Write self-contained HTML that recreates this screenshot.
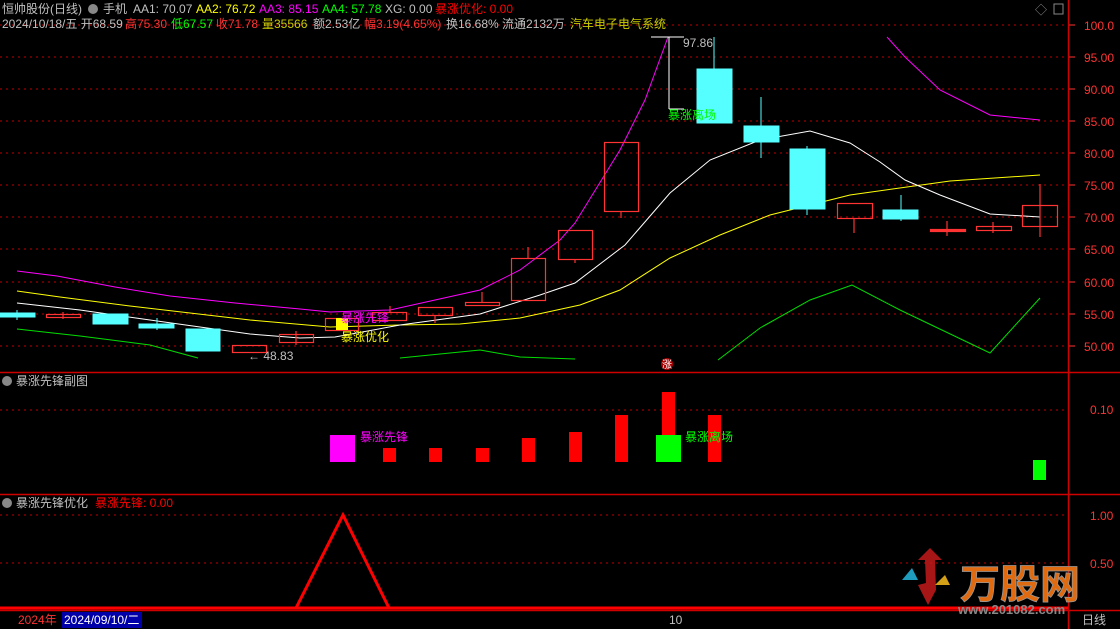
<!DOCTYPE html>
<html><head><meta charset="utf-8"><style>
body{margin:0;background:#000;width:1120px;height:629px;overflow:hidden;font-family:"Liberation Sans","Noto Sans CJK SC",sans-serif}
svg{position:absolute;left:0;top:0}
text{font-family:"Liberation Sans","Noto Sans CJK SC",sans-serif;font-size:12px}
</style></head><body>
<svg width="1120" height="629" viewBox="0 0 1120 629">
<g stroke="#c00000" stroke-dasharray="2,4" stroke-width="1">
<line x1="0" x2="1068" y1="25" y2="25"/><line x1="0" x2="1068" y1="57" y2="57"/><line x1="0" x2="1068" y1="89" y2="89"/><line x1="0" x2="1068" y1="121" y2="121"/><line x1="0" x2="1068" y1="153" y2="153"/><line x1="0" x2="1068" y1="185" y2="185"/><line x1="0" x2="1068" y1="217" y2="217"/><line x1="0" x2="1068" y1="249" y2="249"/><line x1="0" x2="1068" y1="282" y2="282"/><line x1="0" x2="1068" y1="314" y2="314"/><line x1="0" x2="1068" y1="346" y2="346"/>
<line x1="0" x2="1068" y1="410" y2="410"/><line x1="0" x2="1068" y1="515" y2="515"/><line x1="0" x2="1068" y1="563" y2="563"/>
</g>
<g stroke="#d00000" stroke-width="1.5">
<line x1="0" x2="1120" y1="372.5" y2="372.5"/><line x1="0" x2="1120" y1="494.5" y2="494.5"/>
<line x1="1068.5" x2="1068.5" y1="0" y2="629"/>
<line x1="0" x2="1120" y1="610.5" y2="610.5"/>
</g>
<g>
<text x="1084" y="30" fill="#ff3333">100.0</text><text x="1084" y="62" fill="#ff3333">95.00</text><text x="1084" y="94" fill="#ff3333">90.00</text><text x="1084" y="126" fill="#ff3333">85.00</text><text x="1084" y="158" fill="#ff3333">80.00</text><text x="1084" y="190" fill="#ff3333">75.00</text><text x="1084" y="222" fill="#ff3333">70.00</text><text x="1084" y="254" fill="#ff3333">65.00</text><text x="1084" y="287" fill="#ff3333">60.00</text><text x="1084" y="319" fill="#ff3333">55.00</text><text x="1084" y="351" fill="#ff3333">50.00</text>
<text x="1090" y="414" fill="#ff3333">0.10</text><text x="1090" y="520" fill="#ff3333">1.00</text><text x="1090" y="568" fill="#ff3333">0.50</text>
</g>
<g stroke="#ff3333" stroke-width="1"><line x1="1069" x2="1075" y1="25" y2="25"/><line x1="1069" x2="1075" y1="57" y2="57"/><line x1="1069" x2="1075" y1="89" y2="89"/><line x1="1069" x2="1075" y1="121" y2="121"/><line x1="1069" x2="1075" y1="153" y2="153"/><line x1="1069" x2="1075" y1="185" y2="185"/><line x1="1069" x2="1075" y1="217" y2="217"/><line x1="1069" x2="1075" y1="249" y2="249"/><line x1="1069" x2="1075" y1="282" y2="282"/><line x1="1069" x2="1075" y1="314" y2="314"/><line x1="1069" x2="1075" y1="346" y2="346"/></g>
<g fill="none" stroke-width="1">
<polyline stroke="#ff00ff" points="17,271 57,276 115,287 170,296 235,303 300,309 330,312 390,310 480,290 520,270 560,240 575,223 620,150 645,100 668,37"/>
<polyline stroke="#ff00ff" points="887,37 905,57 940,90 990,115 1040,120"/>
<polyline stroke="#ffff00" points="17,291 60,297 130,306 250,320 330,327 400,325 460,324 520,318 580,305 620,290 670,258 720,235 770,215 850,195 950,181 1040,175"/>
<polyline stroke="#ffffff" points="17,303 80,310 150,320 250,334 300,338 335,337 400,325 480,314 540,295 575,283 625,245 670,193 710,160 760,140 810,131 850,143 880,162 905,180 940,195 990,214 1040,217"/>
<polyline stroke="#00dd00" points="17,329 80,336 150,345 198,358"/>
<polyline stroke="#00dd00" points="400,358 480,350 520,357 575,359"/>
<polyline stroke="#00dd00" points="718,360 760,328 810,300 852,285 900,310 990,353 1040,298"/>
</g>
<g stroke="#ff3333" stroke-width="1.2" fill="none">
<line x1="63" x2="63" y1="312" y2="319"/><rect x="46.5" y="314.5" width="34" height="3"/>
<rect x="232.5" y="345.5" width="34" height="7"/>
<line x1="296" x2="296" y1="331" y2="345"/><rect x="279.5" y="334.5" width="34" height="8"/>
<rect x="325.5" y="318.5" width="33" height="12"/>
<line x1="390" x2="390" y1="306" y2="313"/><rect x="372.5" y="312.5" width="34" height="8"/>
<line x1="435" x2="435" y1="315" y2="323"/><rect x="418.5" y="307.5" width="34" height="8"/>
<line x1="482" x2="482" y1="292" y2="302"/><rect x="465.5" y="302.5" width="34" height="3"/>
<line x1="528" x2="528" y1="247" y2="258"/><rect x="511.5" y="258.5" width="34" height="42"/>
<line x1="575" x2="575" y1="259" y2="263"/><rect x="558.5" y="230.5" width="34" height="29"/>
<line x1="621" x2="621" y1="211" y2="218"/><rect x="604.5" y="142.5" width="34" height="69"/>
<line x1="854" x2="854" y1="218" y2="233"/><rect x="837.5" y="203.5" width="35" height="15"/>
<line x1="947" x2="947" y1="221" y2="236"/><rect x="930.5" y="229.5" width="35" height="2" fill="#ff3333"/>
<line x1="993" x2="993" y1="222" y2="233"/><rect x="976.5" y="226.5" width="35" height="4"/>
<line x1="1040" x2="1040" y1="184" y2="237"/><rect x="1022.5" y="205.5" width="35" height="21"/>
</g>
<g fill="#55ffff" stroke="#55ffff">
<rect x="0" y="313" width="35" height="4"/><line x1="17" x2="17" y1="310" y2="320"/>
<rect x="93" y="314" width="35" height="10"/>
<rect x="139" y="324" width="35" height="4"/><line x1="157" x2="157" y1="318" y2="330"/>
<rect x="186" y="329" width="34" height="22"/>
<rect x="697" y="69" width="35" height="54"/><line x1="714" x2="714" y1="37" y2="69"/>
<rect x="744" y="126" width="35" height="16"/><line x1="761" x2="761" y1="97" y2="158"/>
<rect x="790" y="149" width="35" height="60"/><line x1="807" x2="807" y1="146" y2="215"/>
<rect x="883" y="210" width="35" height="9"/><line x1="901" x2="901" y1="195" y2="221"/>
</g>
<rect x="336" y="318" width="12" height="12" fill="#ffff00"/>
<g stroke="#fff" fill="none"><polyline points="651,37 684,37"/><line x1="669" x2="669" y1="37" y2="109"/><line x1="669" x2="684" y1="109" y2="109"/></g>
<text x="683" y="47" fill="#c0c0c0">97.86</text>
<text x="248" y="360" fill="#c0c0c0">← 48.83</text>
<text x="341" y="322" fill="#ff00ff">暴涨先锋</text>
<text x="341" y="341" fill="#ffff00">暴涨优化</text>
<text x="668" y="119" fill="#00ff00">暴涨离场</text>
<circle cx="667" cy="364" r="6" fill="#aa0000"/><text x="662" y="368" fill="#fff" style="font-size:10px">涨</text>
<rect x="330" y="435" width="25" height="27" fill="#ff00ff"/>
<g fill="#ff0000"><rect x="383" y="448" width="13" height="14"/><rect x="429" y="448" width="13" height="14"/><rect x="476" y="448" width="13" height="14"/><rect x="522" y="438" width="13" height="24"/><rect x="569" y="432" width="13" height="30"/><rect x="615" y="415" width="13" height="47"/><rect x="662" y="392" width="13" height="70"/><rect x="708" y="415" width="13" height="47"/></g>
<rect x="656" y="435" width="25" height="27" fill="#00ff00"/>
<rect x="1033" y="460" width="13" height="20" fill="#00ff00"/>
<text x="360" y="441" fill="#ff00ff">暴涨先锋</text>
<text x="685" y="441" fill="#00ff00">暴涨离场</text>
<line x1="0" x2="1068" y1="608" y2="608" stroke="#ff0000" stroke-width="3"/>
<polyline points="296,608 343,515 389,608" fill="none" stroke="#ff0000" stroke-width="3"/>
<g>
<text x="2" y="13" fill="#c0c0c0">恒帅股份(日线)</text>
<circle cx="93" cy="9" r="5" fill="#888"/><text x="103" y="13" fill="#c0c0c0">手机</text>
<text x="133" y="13" fill="#c0c0c0">AA1: 70.07</text>
<text x="196" y="13" fill="#ffff00">AA2: 76.72</text>
<text x="259" y="13" fill="#ff00ff">AA3: 85.15</text>
<text x="322" y="13" fill="#00ff00">AA4: 57.78</text>
<text x="385" y="13" fill="#c0c0c0">XG: 0.00</text>
<text x="435" y="13" fill="#ff0000">暴涨优化: 0.00</text>
<text x="2" y="28" fill="#c0c0c0">2024/10/18/五 开68.59</text>
<text x="125" y="28" fill="#ff3333">高75.30</text>
<text x="171" y="28" fill="#00ff00">低67.57</text>
<text x="216" y="28" fill="#ff3333">收71.78</text>
<text x="262" y="28" fill="#cccc00">量35566</text>
<text x="313" y="28" fill="#c0c0c0">额2.53亿</text>
<text x="364" y="28" fill="#ff3333">幅3.19(4.65%)</text>
<text x="446" y="28" fill="#c0c0c0">换16.68% 流通2132万</text>
<text x="570" y="28" fill="#cccc00">汽车电子电气系统</text>
<circle cx="7" cy="381" r="5" fill="#888"/><text x="16" y="385" fill="#c0c0c0">暴涨先锋副图</text>
<circle cx="7" cy="503" r="5" fill="#888"/><text x="16" y="507" fill="#c0c0c0">暴涨先锋优化</text>
<text x="95" y="507" fill="#ff0000">暴涨先锋: 0.00</text>
<text x="1035" y="14" fill="#888">◇</text><rect x="1054" y="4" width="9" height="10" fill="none" stroke="#888"/>
<text x="18" y="624" fill="#ff3333">2024年</text>
<rect x="62" y="612" width="80" height="16" fill="#0000aa"/>
<text x="64" y="624" fill="#ffffff">2024/09/10/二</text>
<text x="669" y="624" fill="#c0c0c0">10</text>
<text x="1082" y="624" fill="#c0c0c0">日线</text>
</g>
<polygon points="928,605 918,585 926,583 925,560 918,560 930,548 942,560 935,560 936,590" fill="#c41a1a" opacity="0.85"/>
<polygon points="902,580 912,568 918,580" fill="#1e9bbd"/>
<polygon points="935,585 945,575 950,585" fill="#d4a017"/>
<text x="960" y="598" fill="#e06a10" stroke="#999" stroke-width="0.8" style="font-size:40px;font-weight:bold">万股网</text>
<text x="958" y="614" fill="#888" style="font-size:13px;font-weight:bold">www.201082.com</text>
</svg>
</body></html>
